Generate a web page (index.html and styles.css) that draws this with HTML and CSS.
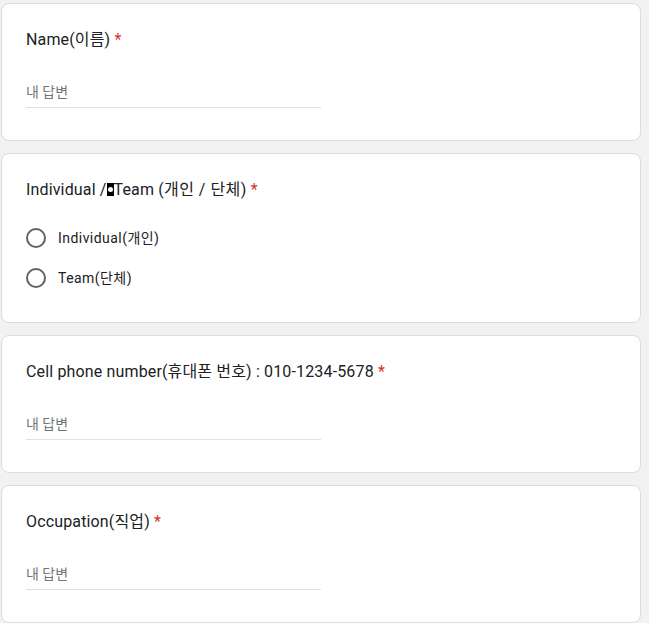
FILE: index.html
```html
<!DOCTYPE html>
<html lang="ko">
<head>
<meta charset="utf-8">
<link rel="stylesheet" href="styles.css">
</head>
<body>
<div class="page">
  <div class="card">
    <div class="title">Name(이름) <span class="req">*</span></div>
    <div class="field"><span class="ph">내 답변</span></div>
  </div>
  <div class="card">
    <div class="title">Individual /<span class="tofu"></span>Team (<span class="ko">개인 / 단체</span>) <span class="req">*</span></div>
    <div class="options">
      <div class="option"><span class="radio"></span><span class="label">Individual(개인)</span></div>
      <div class="option"><span class="radio"></span><span class="label">Team(단체)</span></div>
    </div>
  </div>
  <div class="card">
    <div class="title">Cell phone number(휴대폰 번호) : 010-1234-5678 <span class="req">*</span></div>
    <div class="field"><span class="ph">내 답변</span></div>
  </div>
  <div class="card">
    <div class="title">Occupation(직업) <span class="req">*</span></div>
    <div class="field"><span class="ph">내 답변</span></div>
  </div>
</div>
</body>
</html>
```

FILE: styles.css
```css
html, body {
  margin: 0;
  padding: 0;
  background: #f2f2f2;
}
body {
  font-family: Roboto, "Noto Sans CJK KR", "Noto Sans", sans-serif;
  color: #202124;
}
.page {
  padding: 3px 0 0 1px;
  width: 640px;
  display: flex;
  flex-direction: column;
  gap: 12px;
}
.card {
  background: #fff;
  border: 1px solid #dadce0;
  border-radius: 8px;
  padding: 24px;
}
.title {
  font-size: 16px;
  line-height: 24px;
  letter-spacing: 0.15px;
  white-space: nowrap;
}
.ko {
  letter-spacing: 0.5px;
}
.req {
  color: #d93025;
}
.tofu {
  display: inline-block;
  position: relative;
  width: 7px;
  height: 13px;
  background: #000;
  vertical-align: -1px;
}
.tofu::after {
  content: "";
  position: absolute;
  left: 1px;
  top: 4px;
  width: 5px;
  height: 5px;
  border-radius: 50%;
  background: #fff;
}
.field {
  margin-top: 30px;
  margin-bottom: 8px;
  width: 295px;
  padding-bottom: 5px;
  border-bottom: 1px solid #e0e0e0;
  font-size: 14px;
  line-height: 20px;
}
.ph {
  color: #70757a;
}
.options {
  margin-top: 16px;
  display: flex;
  flex-direction: column;
}
.option {
  height: 40px;
  display: flex;
  align-items: center;
  gap: 12px;
}
.radio {
  box-sizing: border-box;
  width: 20px;
  height: 20px;
  border: 2px solid #5f6368;
  border-radius: 50%;
}
.label {
  font-size: 14px;
  line-height: 20px;
  letter-spacing: 0.45px;
}
```
